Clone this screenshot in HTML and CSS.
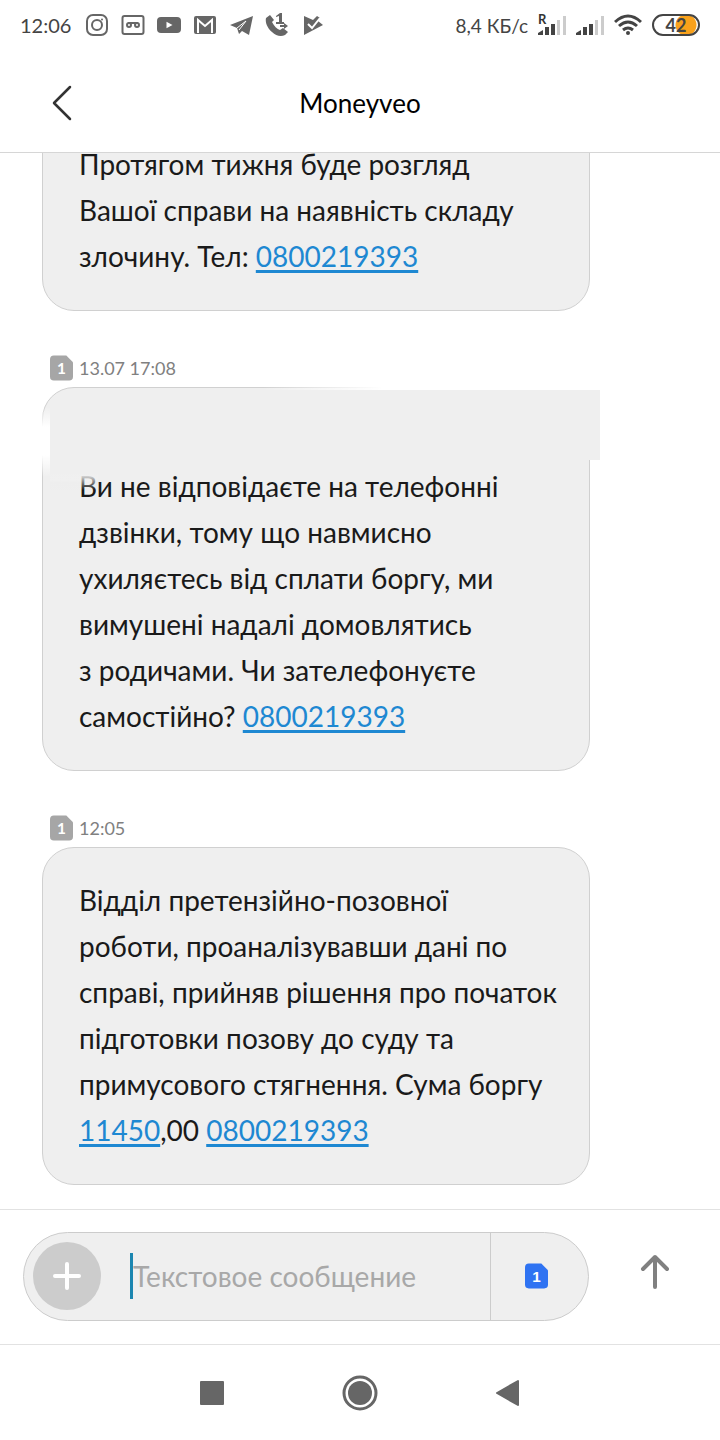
FILE: index.html
```
<!DOCTYPE html>
<html lang="uk">

<head>
    <meta charset="UTF-8">
    <meta name="viewport" content="width=device-width, initial-scale=1.0">
    <title>Moneyveo</title>
    <link rel="stylesheet" href="styles.css">
</head>

<body>
    <div class="status-bar">
        <div class="status-group">
            <span class="clock">12:06</span>
            <!-- Instagram -->
            <svg class="status-icon" viewBox="0 0 24 24" fill="none" stroke="#666" stroke-width="2">
                <rect x="2" y="2" width="20" height="20" rx="6" />
                <circle cx="12" cy="12" r="5" />
                <circle cx="17" cy="6.500" r="1" fill="#666" stroke="none" />
            </svg>
            <!-- Recorder -->
            <svg class="status-icon" viewBox="0 0 24 24" fill="none" stroke="#666" stroke-width="2">
                <rect x="1.500" y="3" width="21" height="18" rx="2" />
                <circle cx="8" cy="12" r="2" />
                <circle cx="16" cy="12" r="2" />
                <path d="M7 10h10" />
            </svg>
            <!-- YouTube -->
            <svg class="status-icon" viewBox="0 0 24 24">
                <rect x="0" y="4" width="24" height="16" rx="4" fill="#666" />
                <path d="M9.500 8.700v6.600l6-3.300z" fill="#fff" />
            </svg>
            <!-- Gmail -->
            <svg class="status-icon" viewBox="0 0 24 24">
                <rect x="1" y="3" width="22" height="18" rx="2" fill="#666" />
                <path d="M5 20V7l7 6 7-6v13" fill="none" stroke="#fff" stroke-width="2" />
            </svg>
            <!-- Telegram -->
            <svg class="status-icon" viewBox="0 0 24 24">
                <path d="M1 12L24 3l-4 19-7-4-3 3-2-6z" fill="#666" />
                <path d="M8 15l9-7-7 9" fill="none" stroke="#fff" stroke-width="1" />
            </svg>
            <!-- Call on SIM 1 -->
            <svg class="status-icon" viewBox="0 0 24 24" fill="#666">
                <path d="M5 2L1 5c-1 4 1 10 6 14 4 4 9 5 13 3l3-3-5-4-3 2c-3-1-6-4-8-8l2-2z" />
                <path d="M11 3l4-3h2v9h2v2h-8V9h3V3l-3 1zM15 12h4v-2l4 3-4 3v-2h-4z" />
            </svg>
            <!-- Play check -->
            <svg class="status-icon" viewBox="0 0 24 24">
                <path d="M3 3l9 4 4-4 3 2-2 3 5 4-19 10z" fill="#666" />
                <path d="M7 11l4 4L19 5" fill="none" stroke="#fff" stroke-width="2" />
            </svg>
        </div>
        <div class="status-group status-right">
            <span class="speed">8,4 КБ/с</span>
            <svg class="signal" viewBox="0 0 28 24">
                <text class="roaming" x="0" y="11">R</text>
                <path d="M0 22v-2l5-3v5zM7 14h4v8H7zM13 11h4v11h-4z" fill="#444" />
                <path d="M19 7h3v15h-3zM25 3h3v19h-3z" fill="#ccc" />
            </svg>
            <svg class="signal" viewBox="0 0 28 24">
                <path d="M0 22v-2l5-3v5zM7 14h4v8H7zM13 11h4v11h-4z" fill="#444" />
                <path d="M19 7h3v15h-3zM25 3h3v19h-3z" fill="#ccc" />
            </svg>
            <svg class="wifi" viewBox="0 0 28 24" fill="none" stroke="#444" stroke-width="3">
                <path d="M1 9q13-12 26 0M5 13q9-8 18 0M9 17q5-4 10 0" />
                <circle cx="14" cy="20" r="2" fill="#444" stroke="none" />
            </svg>
            <span class="battery">42</span>
        </div>
    </div>

    <header class="header">
        <button class="back" aria-label="Назад">
            <svg viewBox="0 0 20 36" fill="none" stroke="#333" stroke-width="2.500" stroke-linecap="round" stroke-linejoin="round">
                <path d="M18 2L2 18l16 16" />
            </svg>
        </button>
        <h1>Moneyveo</h1>
    </header>

    <main class="messages">
        <p class="bubble">Протягом тижня буде розгляд<br>Вашої справи на наявність складу<br>злочину. Тел: <a href="tel:0800219393">0800219393</a></p>

        <div class="meta">
            <svg class="sim" viewBox="0 0 24 26">
                <path d="M4 0h13l7 7v15q0 4-4 4H4q-4 0-4-4V4q0-4 4-4z" />
                <text x="12" y="19">1</text>
            </svg>
            <time>13.07 17:08</time>
        </div>
        <p class="bubble erased"><br>Ви не відповідаєте на телефонні<br>дзвінки, тому що навмисно<br>ухиляєтесь від сплати боргу, ми<br>вимушені надалі домовлятись<br>з родичами. Чи зателефонуєте<br>самостійно? <a href="tel:0800219393">0800219393</a></p>

        <div class="meta">
            <svg class="sim" viewBox="0 0 24 26">
                <path d="M4 0h13l7 7v15q0 4-4 4H4q-4 0-4-4V4q0-4 4-4z" />
                <text x="12" y="19">1</text>
            </svg>
            <time>12:05</time>
        </div>
        <p class="bubble">Відділ претензійно-позовної<br>роботи, проаналізувавши дані по<br>справі, прийняв рішення про початок<br>підготовки позову до суду та<br>примусового стягнення. Сума боргу<br><a href="tel:11450">11450</a>,00 <a href="tel:0800219393">0800219393</a></p>
    </main>

    <form class="composer">
        <div class="composer-box">
            <button type="button" class="attach" aria-label="Добавить">
                <svg viewBox="0 0 28 28" stroke="#fff" stroke-width="4" stroke-linecap="round">
                    <path d="M14 2v24M2 14h24" />
                </svg>
            </button>
            <span class="caret"></span>
            <input type="text" class="message-input" placeholder="Текстовое сообщение" aria-label="Текстовое сообщение">
            <button type="button" class="sim-switch" aria-label="SIM 1">
                <svg class="sim sim-active" viewBox="0 0 24 26">
                    <path d="M4 0h13l7 7v15q0 4-4 4H4q-4 0-4-4V4q0-4 4-4z" />
                    <text x="12" y="19">1</text>
                </svg>
            </button>
        </div>
        <button type="button" class="send" aria-label="Отправить">
            <svg viewBox="0 0 30 36" fill="none" stroke="#808080" stroke-width="4" stroke-linecap="round" stroke-linejoin="round">
                <path d="M15 33V3M3 15L15 3l12 12" />
            </svg>
        </button>
    </form>

    <nav class="nav-bar">
        <button aria-label="Меню">
            <svg viewBox="0 0 36 36" fill="#666">
                <rect x="6" y="6" width="24" height="24" rx="1" />
            </svg>
        </button>
        <button aria-label="Домой">
            <svg viewBox="0 0 36 36" fill="#666">
                <circle cx="18" cy="18" r="16" fill="none" stroke="#666" stroke-width="3" />
                <circle cx="18" cy="18" r="12" />
            </svg>
        </button>
        <button aria-label="Назад">
            <svg viewBox="0 0 36 36" fill="#666" stroke="#666" stroke-width="2" stroke-linejoin="round">
                <path d="M7 18L28 6v24z" />
            </svg>
        </button>
    </nav>
</body>

</html>
```

FILE: styles.css
```
* {
    box-sizing: border-box;
}

body {
    display: flex;
    flex-direction: column;
    height: 100vh;
    margin: 0;
    background-color: #fff;
    font-family: Lato, "Open Sans", sans-serif;
    color: #1a1a1a;
}

button {
    display: flex;
    justify-content: center;
    align-items: center;
    padding: 0;
    border: none;
    background: none;
    cursor: pointer;
}
/* Status bar */

.status-bar {
    display: flex;
    justify-content: space-between;
    align-items: center;
    height: 50px;
    padding: 0 20px;
    font-size: 20px;
    color: #444;
}

.status-group {
    display: flex;
    align-items: center;
    gap: 12px;
}

.clock {
    padding-right: 2px;
}

.status-right {
    gap: 10px;
}

.speed {
    font-size: 19px;
}

.status-icon {
    width: 24px;
    height: 24px;
}

.signal {
    width: 28px;
    height: 24px;
    overflow: visible;
}

.roaming {
    font-size: 13px;
    font-weight: bold;
    fill: #333;
}

.wifi {
    width: 28px;
    height: 24px;
}

.battery {
    display: flex;
    justify-content: center;
    align-items: center;
    width: 48px;
    height: 22px;
    border: 2px solid #444;
    border-radius: 11px;
    background: radial-gradient(circle at 32px 9px, #f9a11b 10px, #fff 11px);
    font-size: 18px;
    font-weight: bold;
}
/* Header */

.header {
    display: grid;
    grid-template-columns: 84px 1fr 84px;
    align-items: center;
    height: 103px;
    padding: 4px 20px 0;
    border-bottom: 1px solid #d6d6d6;
}

.back svg {
    width: 20px;
    height: 36px;
}

h1 {
    margin: 0;
    font-size: 26px;
    font-weight: normal;
    text-align: center;
    color: #000;
}
/* Messages, the newest one stays at the bottom */

.messages {
    display: flex;
    flex: 1;
    flex-direction: column;
    justify-content: flex-end;
    min-height: 0;
    overflow: hidden;
    padding: 0 130px 24px 42px;
}

.bubble {
    flex-shrink: 0;
    margin: 0;
    padding: 29px 36px 31px;
    border: 1px solid #d0d0d0;
    border-radius: 32px;
    background-color: #efefef;
    font-size: 28px;
    line-height: 46px;
    white-space: nowrap;
}

.bubble a {
    color: #1e88d2;
    text-decoration: underline;
    text-decoration-thickness: 3px;
    text-underline-offset: 3px;
}

.meta {
    display: flex;
    flex-shrink: 0;
    align-items: center;
    gap: 6px;
    height: 76px;
    padding: 38px 8px 0;
    font-size: 18px;
    color: #808080;
}

.sim {
    width: 23px;
    height: 26px;
    fill: #a6a6a6;
}

.sim text {
    fill: #fff;
    font-size: 16px;
    font-weight: bold;
    text-anchor: middle;
}

.sim-active {
    fill: #2f73f2;
}
/* Message with the first line wiped out */

.erased {
    position: relative;
}

.erased::before {
    content: "";
    position: absolute;
    top: 2px;
    left: 7px;
    right: -11px;
    height: 100px;
    border-top-left-radius: 24px;
    background: linear-gradient(#efefef, #efefef) top / 100% 70px no-repeat, linear-gradient(#efefef 84px, transparent) left / 48px 100% no-repeat;
}

.erased::after {
    content: "";
    position: absolute;
    top: -1px;
    left: -1px;
    right: -1px;
    height: 90px;
    background: linear-gradient(to right, transparent 220px, #fff 340px) top / 100% 3px no-repeat, linear-gradient(transparent 20px, #fff 40px, #fff 68px, transparent) left / 8px 100% no-repeat;
}
/* Input row */

.composer {
    display: flex;
    align-items: center;
    height: 136px;
    padding-bottom: 2px;
    border-top: 1px solid #e2e2e2;
    border-bottom: 1px solid #e2e2e2;
}

.composer-box {
    display: flex;
    flex: 1;
    align-items: center;
    height: 89px;
    margin-left: 23px;
    padding-left: 9px;
    border: 1px solid #ccc;
    border-radius: 45px;
    background-color: #efefef;
}

.attach {
    flex-shrink: 0;
    width: 68px;
    height: 68px;
    border-radius: 50%;
    background-color: #ccc;
}

.attach svg {
    width: 28px;
    height: 28px;
}

.caret {
    width: 3px;
    height: 46px;
    margin-left: 29px;
    background-color: #1c86b0;
}

.message-input {
    flex: 1;
    min-width: 0;
    height: 60px;
    padding: 0;
    border: none;
    outline: none;
    background: none;
    font-family: inherit;
    font-size: 28px;
}

.message-input::placeholder {
    color: #a8a8a8;
}

.sim-switch {
    width: 98px;
    height: 100%;
    padding-right: 6px;
    border-left: 1px solid #ccc;
}

.send {
    width: 131px;
    height: 89px;
    padding-bottom: 8px;
}

.send svg {
    width: 30px;
    height: 36px;
}
/* System navigation */

.nav-bar {
    display: flex;
    justify-content: center;
    align-items: center;
    gap: 100px;
    height: 95px;
}

.nav-bar button {
    width: 48px;
    height: 48px;
}

.nav-bar svg {
    width: 36px;
    height: 36px;
}
```
